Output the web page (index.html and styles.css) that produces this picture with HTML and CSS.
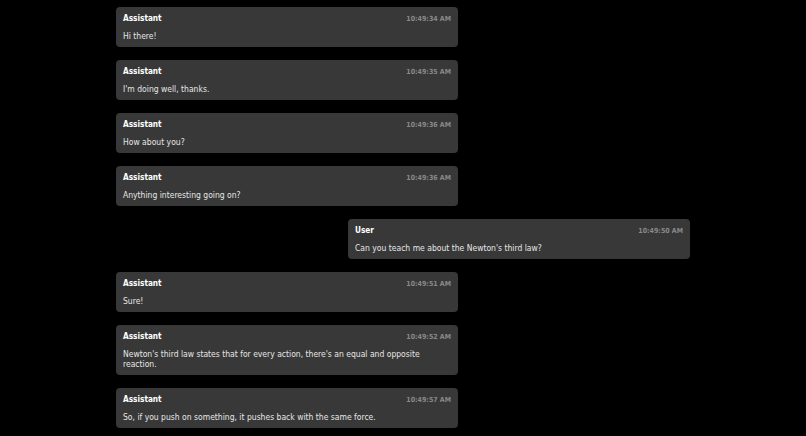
FILE: index.html
```html
<!DOCTYPE html>
<html lang="en">
<head>
    <meta charset="UTF-8">
    <meta name="viewport" content="width=device-width, initial-scale=1.0">
    <title>Chat</title>
    <link rel="stylesheet" href="styles.css">
</head>
<body>
    <div class="chat">
        <div class="message assistant">
            <div class="meta"><span class="name">Assistant</span><span class="time">10:49:34 AM</span></div>
            <div class="text">Hi there!</div>
        </div>
        <div class="message assistant">
            <div class="meta"><span class="name">Assistant</span><span class="time">10:49:35 AM</span></div>
            <div class="text">I'm doing well, thanks.</div>
        </div>
        <div class="message assistant">
            <div class="meta"><span class="name">Assistant</span><span class="time">10:49:36 AM</span></div>
            <div class="text">How about you?</div>
        </div>
        <div class="message assistant">
            <div class="meta"><span class="name">Assistant</span><span class="time">10:49:36 AM</span></div>
            <div class="text">Anything interesting going on?</div>
        </div>
        <div class="message user">
            <div class="meta"><span class="name">User</span><span class="time">10:49:50 AM</span></div>
            <div class="text">Can you teach me about the Newton's third law?</div>
        </div>
        <div class="message assistant">
            <div class="meta"><span class="name">Assistant</span><span class="time">10:49:51 AM</span></div>
            <div class="text">Sure!</div>
        </div>
        <div class="message assistant">
            <div class="meta"><span class="name">Assistant</span><span class="time">10:49:52 AM</span></div>
            <div class="text">Newton's third law states that for every action, there's an equal and opposite reaction.</div>
        </div>
        <div class="message assistant">
            <div class="meta"><span class="name">Assistant</span><span class="time">10:49:57 AM</span></div>
            <div class="text">So, if you push on something, it pushes back with the same force.</div>
        </div>
    </div>
</body>
</html>
```

FILE: styles.css
```css
body {
    margin: 0;
    background: #000;
    font-family: 'DejaVu Sans Condensed', 'DejaVu Sans', sans-serif;
    font-stretch: condensed;
    color: #e6e6e6;
}

.chat {
    width: 574px;
    margin: 0 auto;
    padding-top: 7px;
    display: flex;
    flex-direction: column;
    align-items: flex-start;
    gap: 13px;
}

.message {
    width: 342px;
    box-sizing: border-box;
    padding: 6px 7px 6px;
    background-color: #383838;
    border-radius: 4px;
}

.message.user {
    align-self: flex-end;
}

.meta {
    display: flex;
    justify-content: space-between;
    align-items: baseline;
    height: 11px;
    line-height: 11px;
    margin-bottom: 7px;
}

.name {
    font-size: 8.2px;
    font-weight: bold;
    color: #fff;
}

.time {
    font-size: 7px;
    font-weight: bold;
    color: #8a8a8a;
}

.text {
    font-size: 8.5px;
    line-height: 10px;
}
```
